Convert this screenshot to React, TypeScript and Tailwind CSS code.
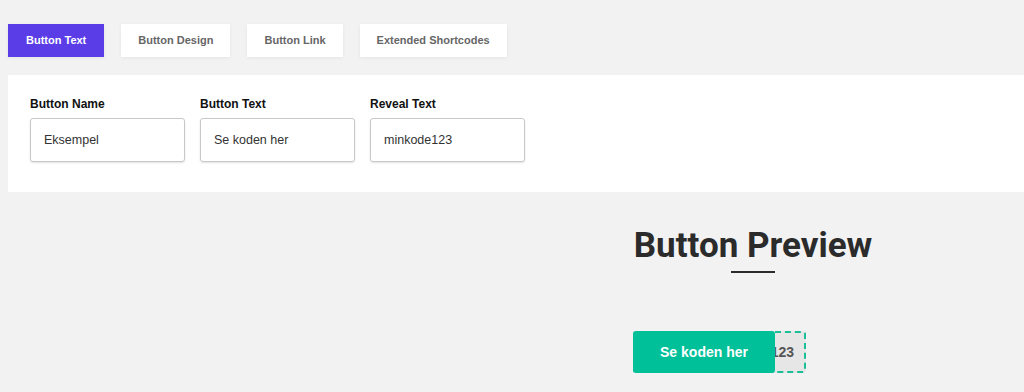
import React from 'react';

const tabs = ['Button Text', 'Button Design', 'Button Link', 'Extended Shortcodes'];

const fields = [
  { label: 'Button Name', value: 'Eksempel' },
  { label: 'Button Text', value: 'Se koden her' },
  { label: 'Reveal Text', value: 'minkode123' },
];

export default function App() {
  return (
    <div className="h-[392px] w-[1024px] overflow-hidden bg-[#f2f2f2] font-['Liberation_Sans',Arial,sans-serif]">
      {/* Tabs */}
      <div className="flex gap-[17px] pl-2 pt-6">
        {tabs.map((tab, i) => (
          <button
            key={tab}
            className={`h-[33px] px-[17px] text-[11px] font-bold shadow-[0_1px_4px_rgba(0,0,0,0.06)] ${
              i === 0 ? 'bg-[#5a3de6] px-[18px] text-white' : 'bg-white text-[#666]'
            }`}
          >
            {tab}
          </button>
        ))}
      </div>

      {/* Fields panel */}
      <div className="ml-2 mt-[18px] flex h-[117px] gap-[15px] bg-white pl-[22px] pt-[22px]">
        {fields.map((f) => (
          <div key={f.label} className="flex flex-col">
            <label className="h-[21px] text-[12px] font-bold leading-[14px] text-[#111]">{f.label}</label>
            <div className="flex h-[44px] w-[155px] items-center rounded-[3px] border border-[#c8c8c8] pl-[13px] text-[12.5px] text-[#333] shadow-[0_1px_2px_rgba(0,0,0,0.12)]">
              {f.value}
            </div>
          </div>
        ))}
      </div>

      {/* Preview */}
      <div className="ml-[633px] mt-8 flex w-[240px] flex-col">
        <div className="flex flex-col items-center">
          <h2 className="whitespace-nowrap font-['Roboto',sans-serif] text-[35px] font-bold leading-[44px] text-[#2b2b2b]">
            Button Preview
          </h2>
          <div className="mt-[3px] h-[2px] w-[44px] bg-[#2b2b2b]" />
        </div>
        <div className="relative mt-[58px] h-[42px] w-[173px]">
          <div className="flex h-full w-full items-center justify-end rounded-[3px] border-2 border-dashed border-[#1bbf97] bg-[#e6e6e6] pr-[10px]">
            <span className="text-[14px] font-bold text-[#555]">123</span>
          </div>
          <div className="absolute left-0 top-0 flex h-[42px] w-[142px] items-center justify-center rounded-[3px] bg-[#00c09a] text-[14px] font-bold text-white">
            Se koden her
          </div>
        </div>
      </div>
    </div>
  );
}
